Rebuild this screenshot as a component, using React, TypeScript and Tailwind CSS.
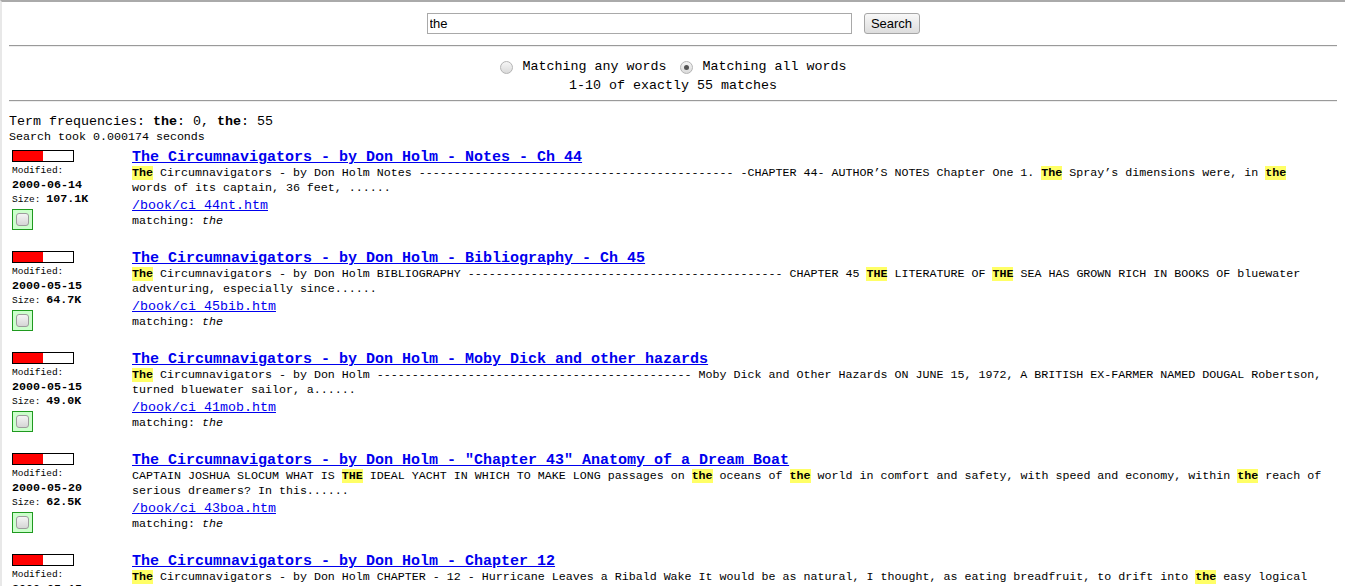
import React from "react";

const DASHES = "-".repeat(45);

type Result = {
  title: string;
  lines: string[];
  url: string;
  date: string;
  size: string;
};

const results: Result[] = [
  {
    title: "The Circumnavigators - by Don Holm - Notes - Ch 44",
    lines: [
      "The Circumnavigators - by Don Holm Notes " + DASHES + " -CHAPTER 44- AUTHOR’S NOTES Chapter One 1. The Spray’s dimensions were, in the",
      "words of its captain, 36 feet, ......",
    ],
    url: "/book/ci_44nt.htm",
    date: "2000-06-14",
    size: "107.1K",
  },
  {
    title: "The Circumnavigators - by Don Holm - Bibliography - Ch 45",
    lines: [
      "The Circumnavigators - by Don Holm BIBLIOGRAPHY " + DASHES + " CHAPTER 45 THE LITERATURE OF THE SEA HAS GROWN RICH IN BOOKS OF bluewater",
      "adventuring, especially since......",
    ],
    url: "/book/ci_45bib.htm",
    date: "2000-05-15",
    size: "64.7K",
  },
  {
    title: "The Circumnavigators - by Don Holm - Moby Dick and other hazards",
    lines: [
      "The Circumnavigators - by Don Holm " + DASHES + " Moby Dick and Other Hazards ON JUNE 15, 1972, A BRITISH EX-FARMER NAMED DOUGAL Robertson,",
      "turned bluewater sailor, a......",
    ],
    url: "/book/ci_41mob.htm",
    date: "2000-05-15",
    size: "49.0K",
  },
  {
    title: "The Circumnavigators - by Don Holm - \"Chapter 43\" Anatomy of a Dream Boat",
    lines: [
      "CAPTAIN JOSHUA SLOCUM WHAT IS THE IDEAL YACHT IN WHICH TO MAKE LONG passages on the oceans of the world in comfort and safety, with speed and economy, within the reach of",
      "serious dreamers? In this......",
    ],
    url: "/book/ci_43boa.htm",
    date: "2000-05-20",
    size: "62.5K",
  },
  {
    title: "The Circumnavigators - by Don Holm - Chapter 12",
    lines: [
      "The Circumnavigators - by Don Holm CHAPTER - 12 - Hurricane Leaves a Ribald Wake It would be as natural, I thought, as eating breadfruit, to drift into the easy logical",
      "conclusion of a voyage......",
    ],
    url: "/book/ci_12hur.htm",
    date: "2000-05-15",
    size: "58.3K",
  },
];

// wrap every "the" of the snippet in a highlight
function highlight(text: string) {
  return text.split(/(\bthe\b)/i).map((part, i) =>
    i % 2 === 1 ? (
      <b key={i} className="bg-[#ffff66]">
        {part}
      </b>
    ) : (
      <span key={i}>{part}</span>
    )
  );
}

function Radio({ checked }: { checked?: boolean }) {
  return (
    <span className="w-[13px] h-[13px] rounded-full border border-[#b4b4b4] bg-linear-to-b from-[#f6f6f6] to-[#dadada] flex items-center justify-center">
      {checked && <span className="w-[5px] h-[5px] rounded-full bg-[#555]" />}
    </span>
  );
}

function ResultRow({ r }: { r: Result }) {
  return (
    <div className="h-[101px] flex">
      {/* LEFT INFO */}
      <div className="w-[123px] shrink-0 pl-[3px]">
        <div className="w-[62px] h-[12px] border border-black bg-white">
          <div className="w-[30px] h-full bg-[#ff0000]" />
        </div>
        <div className="mt-[2px] text-[9.5px] leading-[14px]">Modified:</div>
        <div className="text-[11.67px] leading-[14px] font-bold">{r.date}</div>
        <div className="text-[9.5px] leading-[14px]">
          Size: <b className="text-[11.67px]">{r.size}</b>
        </div>
        <div className="mt-[2px] w-[21px] h-[21px] border border-[#1f9a1f] bg-[#ccffcc] flex items-center justify-center">
          <span className="w-[13px] h-[13px] rounded-[3px] border border-[#9c9c9c] bg-linear-to-b from-[#f4f4f4] to-[#d6d6d6]" />
        </div>
      </div>

      {/* RIGHT CONTENT */}
      <div className="flex-1 min-w-0">
        <a href="#" className="block text-[15px] leading-[16px] font-bold text-[#0000ee] underline whitespace-nowrap">
          {r.title}
        </a>
        <div className="text-[11.67px] leading-[15px]">
          {r.lines.map((line, i) => (
            <div key={i} className="whitespace-nowrap">
              {highlight(line)}
            </div>
          ))}
        </div>
        <a href="#" className="block mt-[1px] text-[13.33px] leading-[17px] text-[#0000ee] underline">
          {r.url}
        </a>
        <div className="text-[11.67px] leading-[14px]">
          matching: <i>the</i>
        </div>
      </div>
    </div>
  );
}

export default function App() {
  return (
    <div className="min-h-screen overflow-hidden bg-white border-t-2 border-l-2 border-t-[#aaaaaa] border-l-[#e8e8e8] font-['Liberation_Mono',monospace] text-black">
      <div className="pl-[7px] pr-[8px]">

        {/* SEARCH FORM */}
        <form className="flex justify-center items-center gap-[12px] pt-[11px]">
          <input
            defaultValue="the"
            className="w-[425px] h-[21px] border border-[#a9a9a9] px-[2px] text-[13px] font-['Liberation_Sans',Arial,sans-serif] outline-none"
          />
          <button
            type="button"
            className="w-[56px] h-[21px] border border-[#a6a6a6] rounded-[3px] bg-linear-to-b from-[#f8f8f8] to-[#dddddd] text-[13px] font-['Liberation_Sans',Arial,sans-serif]"
          >
            Search
          </button>
        </form>

        <div className="mt-[11px] border-t border-t-[#9a9a9a] border-b border-b-[#eeeeee]" />

        {/* MATCH MODE */}
        <div className="mt-[12px] flex justify-center items-center text-[13.33px] leading-[16px]">
          <Radio />
          <span className="ml-[10px]">Matching any words</span>
          <span className="ml-[13px]">
            <Radio checked />
          </span>
          <span className="ml-[10px]">Matching all words</span>
        </div>
        <div className="mt-[3px] text-center text-[13.33px] leading-[16px]">
          1-10 of exactly 55 matches
        </div>

        <div className="mt-[6px] border-t border-t-[#9a9a9a] border-b border-b-[#eeeeee]" />

        {/* STATS */}
        <div className="mt-[12px] text-[13.33px] leading-[16px]">
          Term frequencies: <b>the</b>: 0, <b>the</b>: 55
        </div>
        <div className="text-[11.67px] leading-[14px]">Search took 0.000174 seconds</div>

        {/* RESULTS */}
        <div className="mt-[6px]">
          {results.map((r) => (
            <ResultRow key={r.url} r={r} />
          ))}
        </div>
      </div>
    </div>
  );
}
